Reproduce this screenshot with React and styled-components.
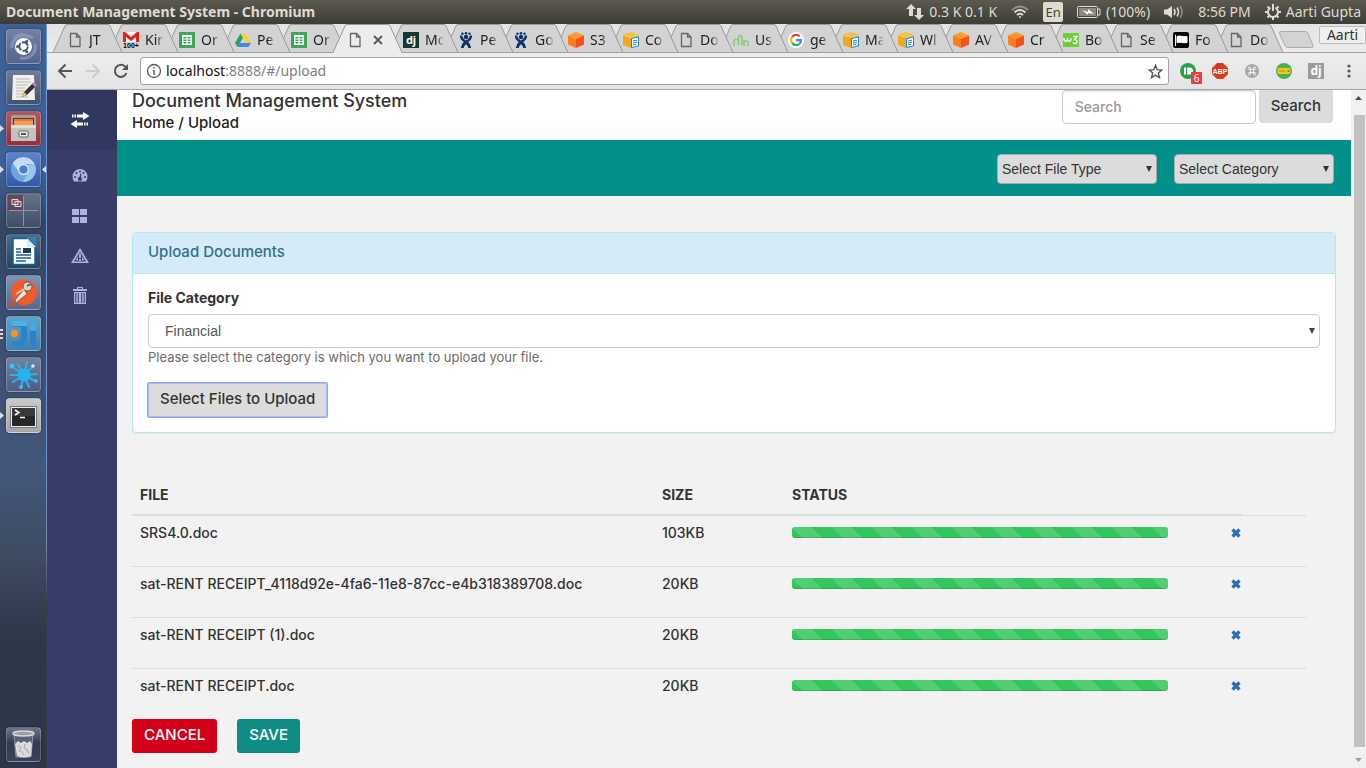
import React from 'react';
import styled, { createGlobalStyle, css } from 'styled-components';

const SYSTEM = '"Noto Sans", "Open Sans", sans-serif';
const SITE = 'Inter, "Open Sans", sans-serif';
const CONTROL = '"Liberation Sans", Arial, sans-serif';

const GlobalStyle = createGlobalStyle`
  *, *::before, *::after { box-sizing: border-box; }
  body { margin: 0; background: #f2f2f2; color: #333; }
  button, input, select { margin: 0; font: inherit; color: inherit; }
  button { cursor: pointer; }
  svg { display: block; flex: none; }
`;

/* ---------- desktop shell ---------- */

const Desktop = styled.div`
  display: grid;
  grid-template-columns: 47px minmax(0, 1fr);
  grid-template-rows: 24px minmax(0, 1fr);
  height: 100vh;
  overflow: hidden;
`;

const MenuBar = styled.header`
  grid-column: 1 / -1;
  display: flex;
  align-items: center;
  justify-content: space-between;
  padding: 0 5px 0 6px;
  background: linear-gradient(#5c594f, #3d3c37);
  color: #dfdbd2;
  font: 14px/24px ${SYSTEM};
  white-space: nowrap;
`;

const WindowTitle = styled.h1`
  margin: 0;
  font: 700 14px/24px ${SYSTEM};
`;

const Indicators = styled.div`
  display: flex;
  align-items: center;
  gap: 14px;
`;

const Indicator = styled.span`
  display: flex;
  align-items: center;
  gap: 5px;
`;

const Keyboard = styled.span`
  width: 20px;
  height: 20px;
  border-radius: 2px;
  background: #dfdbd2;
  color: #45433d;
  font-size: 13px;
  line-height: 20px;
  text-align: center;
`;

const Launcher = styled.nav`
  display: flex;
  flex-direction: column;
  gap: 6px;
  padding: 5px 5px 6px 6px;
  border-right: 1px solid #5c80b2;
  border-image: linear-gradient(#6d97d2 0 55%, #6f89a8 70%, #3a3b3b 78%) 1;
  background: linear-gradient(#3d6198 0, #3e6096 20%, #344563 27%, #3c4f72 40%, #43577b 60%, #3d4a60 72%, #2f374b 82%, #2e364a 100%);
`;

const LaunchButton = styled.button`
  position: relative;
  flex: none;
  width: 35px;
  height: 35px;
  padding: 0;
  border: 1px solid rgba(255, 255, 255, 0.22);
  border-radius: 4px;
  background: ${(p) => p.$tint};
  box-shadow: 0 0 3px rgba(0, 0, 0, 0.4);
  &:last-child { margin-top: auto; }
`;

const Running = styled.svg`
  position: absolute;
  top: 12px;
  ${(p) => (p.$right ? 'right: -6px;' : 'left: -7px;')}
`;

const BrowserWindow = styled.div`
  display: flex;
  flex-direction: column;
  min-width: 0;
`;

/* ---------- browser chrome ---------- */

const TabStrip = styled.div`
  position: relative;
  display: flex;
  flex: none;
  height: 29px;
  padding-left: 6px;
  background: linear-gradient(#e3e3e3, #ececec);
  border-bottom: 1px solid #a0a0a0;
`;

const Tab = styled.button`
  position: relative;
  z-index: ${(p) => p.$level};
  display: flex;
  align-items: center;
  gap: 6px;
  flex: none;
  width: ${(p) => (p.$wide ? 56 : 55)}px;
  height: 29px;
  padding: 2px 0 0 14px;
  border: 0;
  background: none;
  color: #222;
  font: 14px/24px ${SYSTEM};
  text-align: left;
`;

const TabShape = styled.svg`
  position: absolute;
  z-index: -1;
  top: 0;
  left: 0;
`;

const TabLabel = styled.span`
  width: 19px;
  white-space: nowrap;
  mask-image: linear-gradient(90deg, #000 60%, transparent);
`;

const NewTab = styled.button`
  height: 16px;
  margin: 7px auto 0 9px;
  padding: 0;
  border: 0;
  background: none;
`;

const Profile = styled.button`
  width: 47px;
  height: 18px;
  margin-top: 2px;
  padding: 0;
  border: 1px solid #bdbdbd;
  border-radius: 2px;
  background: #efefef;
  color: #333;
  font: 14px/16px ${SYSTEM};
`;

const Toolbar = styled.div`
  display: flex;
  align-items: center;
  flex: none;
  gap: 10px;
  height: 37px;
  padding: 0 9px 0 9px;
  border-bottom: 1px solid #a6a6a6;
  background: linear-gradient(#ededed, #e4e4e4);
`;

const IconButton = styled.button`
  display: grid;
  place-items: center;
  flex: none;
  width: 18px;
  height: 18px;
  padding: 0;
  border: 0;
  background: none;
  position: relative;
`;

const Address = styled.div`
  display: flex;
  align-items: center;
  flex: 1;
  gap: 4px;
  min-width: 0;
  height: 28px;
  padding: 0 4px 0 5px;
  border: 1px solid #a3a3a3;
  border-radius: 3px;
  background: #fff;
  font: 14px/24px ${SYSTEM};
  color: #808080;
`;

const Url = styled.div`
  flex: 1;
  b { color: #111; font-weight: 400; }
`;

const Extensions = styled.div`
  display: flex;
  gap: 14px;
`;

const Count = styled.span`
  position: absolute;
  top: 10px;
  left: 12px;
  width: 11px;
  height: 12px;
  border-radius: 1px;
  background: #f03a3e;
  color: #fff;
  font: 10px/12px ${SYSTEM};
  text-align: center;
`;

/* ---------- web page ---------- */

const Page = styled.div`
  display: grid;
  grid-template-columns: 70px minmax(0, 1fr) 15px;
  flex: 1;
  min-height: 0;
  overflow: hidden;
  background: #f2f2f2;
  color: #333;
  font: 500 14px/20px ${SITE};
`;

const SideNav = styled.nav`
  display: flex;
  flex-direction: column;
  align-items: center;
  gap: 20px;
  padding-right: 4px;
  background: linear-gradient(#303862 0 60px, #353d68 60px);
`;

const SideLink = styled.a`
  display: grid;
  place-items: center;
  width: 20px;
  height: 20px;
  color: #a9b4e4;
  ${(p) => p.$lead && css`
    height: 60px;
    margin-bottom: -4px;
    color: #fff;
  `}
`;

const Content = styled.div`
  min-width: 0;
`;

const TopBar = styled.div`
  display: flex;
  justify-content: space-between;
  height: 50px;
  padding: 0 18px 0 15px;
  background: #fff;
`;

const AppTitle = styled.h2`
  margin: 0;
  font: 500 18px/22px ${SITE};
`;

const Crumbs = styled.nav`
  font-size: 15px;
  line-height: 22px;
  color: #222;
  a { color: inherit; text-decoration: none; }
`;

const SearchForm = styled.form`
  display: flex;
  align-items: flex-start;
  gap: 3px;
`;

const SearchInput = styled.input`
  width: 194px;
  height: 34px;
  padding: 0 12px 2px;
  border: 1px solid #ccc;
  border-radius: 4px;
  background: #fff;
  box-shadow: inset 0 1px 1px rgba(0, 0, 0, 0.075);
  &::placeholder { color: #999; opacity: 1; }
`;

const buttonTones = {
  plain: css`background: #dcdcdc; color: #333;`,
  danger: css`background: #d3001a; color: #fff;`,
  save: css`background: #0f8d85; color: #fff;`,
};

const Button = styled.button`
  height: 34px;
  padding: 0 12px 2px;
  border: 0;
  border-radius: 3px;
  font-size: 15px;
  white-space: nowrap;
  ${(p) => buttonTones[p.$tone || 'plain']}
  ${(p) => p.$focused && css`
    border-radius: 1px;
    box-shadow: 0 0 0 1px #8fa6f2, inset 0 0 0 1px #a9baf5;
  `}
`;

const SearchButton = styled(Button)`
  height: 33px;
  border-radius: 0 0 4px 4px;
`;

const FilterBar = styled.div`
  display: flex;
  justify-content: flex-end;
  gap: 17px;
  height: 56px;
  padding: 14px 17px 12px;
  background: #00908a;
`;

const SelectBox = styled.div`
  position: relative;
  width: ${(p) => (p.$fill ? '100%' : '160px')};
`;

const Select = styled.select`
  appearance: none;
  display: block;
  width: 100%;
  height: ${(p) => (p.$fill ? 34 : 30)}px;
  padding: 0 ${(p) => (p.$fill ? 16 : 4)}px;
  border: 1px solid ${(p) => (p.$fill ? '#ccc' : '#aaa')};
  border-radius: 4px;
  background: ${(p) => (p.$fill ? '#fff' : '#dcdcdc')};
  color: ${(p) => (p.$fill ? '#555' : '#333')};
  font: 14px/20px ${CONTROL};
`;

const SelectArrow = styled.svg`
  position: absolute;
  top: 50%;
  right: 5px;
  margin-top: -3px;
  pointer-events: none;
`;

const Main = styled.main`
  padding: 36px 15px 0;
`;

const Panel = styled.section`
  margin-bottom: 44px;
  border: 1px solid #b5e8f1;
  border-radius: 4px;
  background: #fff;
  box-shadow: 0 1px 1px rgba(0, 0, 0, 0.05);
`;

const PanelTitle = styled.h3`
  margin: 0;
  padding: 9px 15px 11px;
  border-bottom: 1px solid #b5e8f1;
  border-radius: 3px 3px 0 0;
  background: #d5ecf8;
  color: #31708f;
  font: 500 15px/20px ${SITE};
`;

const PanelBody = styled.div`
  display: flex;
  flex-direction: column;
  align-items: flex-start;
  padding: 14px 15px 15px;
`;

const FieldLabel = styled.label`
  margin-bottom: 6px;
  font-weight: 700;
`;

const Help = styled.p`
  margin: 0 0 16px;
  color: #6b6b6b;
  font-size: 13px;
  font-weight: 400;
  line-height: 19px;
`;

const TableArea = styled.div`
  padding-right: 30px;
`;

const FileTable = styled.table`
  width: 100%;
  table-layout: fixed;
  border-collapse: collapse;
  th, td { padding: 8px; text-align: left; vertical-align: top; }
  th { padding-bottom: 9px; font-weight: 700; border-bottom: 2px solid #ddd; }
  td { height: 51px; padding-top: 7px; border-top: 1px solid #ddd; }
`;

const Col = styled.col`
  width: ${(p) => p.$width};
`;

const Progress = styled.div`
  width: 376px;
  max-width: 100%;
  height: 11px;
  margin-top: 4px;
  border-radius: 3px;
  background: #32c65c linear-gradient(45deg, rgba(255, 255, 255, 0.15) 25%, transparent 25%, transparent 50%, rgba(255, 255, 255, 0.15) 50%, rgba(255, 255, 255, 0.15) 75%, transparent 75%) 0 0 / 40px 40px;
  box-shadow: inset 0 -1px 0 rgba(0, 0, 0, 0.15);
`;

const Remove = styled.button`
  display: block;
  margin-top: 5px;
  padding: 0;
  border: 0;
  background: none;
  color: #2a6db5;
`;

const Actions = styled.div`
  display: flex;
  gap: 20px;
`;

const Scrollbar = styled.div`
  display: flex;
  flex-direction: column;
  align-items: center;
  gap: 11px;
  padding: 6px 0 6px;
  background: #f1f1f1;
`;

const Thumb = styled.div`
  flex: 1;
  width: 11px;
  margin: 4px 0 0 1px;
  background: #c1c1c1;
`;

/* ---------- drawings ---------- */

const Small = ({ children }) => (
  <svg width="16" height="16" viewBox="0 0 16 16" aria-hidden="true">{children}</svg>
);

const favicons = {
  doc: <Small><path d="M3.500 1.500h6l3.500 3.500v9.500h-9.500zM9.500 1.500v3.500h3.500" fill="none" stroke="#666" strokeWidth="1.300" /></Small>,
  gmail: (
    <Small>
      <path d="M0 0h16v10H0z" fill="#fff" />
      <path d="M0 10V0h2l6 5 6-5h2v10h-3V5L8 9 3 5v5z" fill="#e2231a" />
      <text x="8" y="16" textAnchor="middle" fontFamily="Liberation Sans" fontWeight="700" fontSize="7">100+</text>
    </Small>
  ),
  sheet: (
    <Small>
      <path d="M0 0h16v16H0z" fill="#3fa55a" />
      <path d="M3 3h10v10H3z" fill="#fff" />
      <path d="M4.500 5h3v1.500h-3zM8.500 5h3v1.500h-3zM4.500 7.500h3V9h-3zM8.500 7.500h3V9h-3zM4.500 10h3v1.500h-3zM8.500 10h3v1.500h-3z" fill="#3fa55a" />
    </Small>
  ),
  drive: (
    <Small>
      <path d="M5.500 1.500 0 11l2.600 4L8 5.700z" fill="#1fa463" />
      <path d="M5.500 1.500h5L16 11h-5z" fill="#fc3" />
      <path d="M5 11h11l-2.600 4H2.600z" fill="#4285f4" />
    </Small>
  ),
  dj: (
    <Small>
      <path d="M0 0h16v16H0z" fill="#103a2c" />
      <text x="8" y="12" textAnchor="middle" fontFamily="Noto Sans" fontWeight="700" fontSize="11" fill="#fff">dj</text>
    </Small>
  ),
  jira: (
    <Small>
      <g fill="#0c336b">
        <circle cx="4.500" cy="1.800" r="1.200" /><circle cx="8" cy="1.300" r="1.300" /><circle cx="11.500" cy="1.800" r="1.200" />
        <circle cx="8" cy="5" r="2.200" />
        <path d="M1.800 3.500h2.400q.3 3.200 3.800 5 3.500-1.800 3.800-5h2.400q-.4 4.500-4 6.500 2.400 1.800 3 6h-2.900Q9.800 13.500 8 12.200 6.200 13.500 5.700 16H2.800q.6-4.200 3-6-3.600-2-4-6.500z" />
      </g>
    </Small>
  ),
  cube: (
    <Small>
      <path d="m8 0 8 3.500L8 7 0 3.500z" fill="#ff9a2a" />
      <path d="M0 3.500 8 7v9l-8-3.500z" fill="#fd7b1c" />
      <path d="M16 3.500 8 7v9l8-3.500z" fill="#f4511e" />
    </Small>
  ),
  note: (
    <Small>
      <path d="m8 0 8 2.500L8 5 0 2.500z" fill="#f8c13a" />
      <path d="M0 3.200 8 6v10l-8-3z" fill="#f5a81c" />
      <path d="m8 6 8-3v9l-8 4z" fill="#f3b13a" />
      <path d="m8.500 6.500 7-1.500v9l-7 1.500z" fill="#fff" stroke="#1b87c9" />
      <path d="m10 9 4-.8M10 11l4-.8M10 13l3-.6" stroke="#1b87c9" />
    </Small>
  ),
  rabbit: (
    <Small>
      <path d="M1 14V9a2.300 2.300 0 0 1 4.500 0v4M5.500 12V5a1.800 1.800 0 0 1 3.500 0v8M11 8v6m0-3a2 2 0 0 1 4 0v3" fill="none" stroke="#8cc878" strokeWidth="1.600" />
    </Small>
  ),
  google: (
    <Small>
      <circle cx="8" cy="8" r="8" fill="#fff" />
      <g fill="none" strokeWidth="2.200">
        <path d="M4 5a5 5 0 0 1 7.600-.7" stroke="#ea4335" />
        <path d="M4.100 11A5 5 0 0 1 4 5" stroke="#fbbc05" />
        <path d="M11.500 11.700A5 5 0 0 1 4 11" stroke="#34a853" />
        <path d="M8 8.200h5a5 5 0 0 1-1.600 3.600" stroke="#4285f4" />
      </g>
    </Small>
  ),
  w3: (
    <Small>
      <path d="M0 1h16v14H0z" fill="#6ccf3a" />
      <path d="M1 6v1.500a1.500 1.500 0 0 0 3.500 0V6v1.500a1.500 1.500 0 0 0 3.500 0V6.500M10 4.500h4l-2.300 3c3 0 3 4 .3 4q-1.500 0-2-1" fill="none" stroke="#fff" strokeWidth="1.400" />
    </Small>
  ),
  flag: (
    <Small>
      <rect width="16" height="16" rx="2" fill="#000" />
      <path d="M2.500 3v11M4 4.500c3-1.500 6 1 10 0v6c-4 1-7-1-10 0z" fill="#fff" stroke="#fff" />
    </Small>
  ),
};

const TABS = [
  ['doc', 'JT'], ['gmail', 'Kir'], ['sheet', 'Or'], ['drive', 'Pe'], ['sheet', 'Or'], ['doc', ''],
  ['dj', 'Mo'], ['jira', 'Pe'], ['jira', 'Go'], ['cube', 'S3'], ['note', 'Co'], ['doc', 'Do'],
  ['rabbit', 'Us'], ['google', 'ge'], ['note', 'Ma'], ['note', 'Wl'], ['cube', 'AV'], ['cube', 'Cr'],
  ['w3', 'Bo'], ['doc', 'Se'], ['flag', 'Fo'], ['doc', 'Do'],
];
const ACTIVE_TAB = 5;

function BrowserTab({ icon, label, index }) {
  const active = index === ACTIVE_TAB;
  return (
    <Tab type="button" $wide={index <= ACTIVE_TAB} $level={active ? 40 : 30 - index} aria-label={label || 'Upload'}>
      <TabShape width="69" height="29" viewBox="0 0 69 29" aria-hidden="true">
        <path d="M0 28.500 12 2q.6-1.500 2-1.500h41q1.400 0 2 1.500l12 26.500" fill={active ? '#ececec' : '#d3d3d3'} stroke="#999" />
        <path d={active ? 'M1 28.500h67' : 'M0 28.500h69'} stroke={active ? '#ececec' : '#a0a0a0'} />
      </TabShape>
      {favicons[icon]}
      {active ? (
        <svg width="16" height="10" viewBox="0 0 16 10" aria-hidden="true"><path d="m5 1 8 8m0-8-8 8" stroke="#555" strokeWidth="1.800" /></svg>
      ) : <TabLabel>{label}</TabLabel>}
    </Tab>
  );
}

const Tile = ({ children }) => (
  <svg width="33" height="33" viewBox="0 0 33 33" aria-hidden="true">{children}</svg>
);

const LAUNCHERS = [
  {
    name: 'Search your computer', tint: 'linear-gradient(#7281a4, #53658f)',
    art: (
      <Tile>
        <path d="M5 18C4 8 16 2 26 8M28 14c2 8-5 16-15 14M7 8c5-4 12-4 16 0" fill="none" stroke="#9aa6c2" strokeWidth="3" opacity=".6" />
        <circle cx="16.500" cy="16.500" r="8.500" fill="#fff" />
        <circle cx="16.500" cy="16.500" r="4.200" fill="none" stroke="#45557b" strokeWidth="2" strokeDasharray="7.500 1.300" />
        <circle cx="10.500" cy="16.500" r="1.500" fill="#45557b" /><circle cx="19.800" cy="11.300" r="1.500" fill="#45557b" /><circle cx="19.800" cy="21.700" r="1.500" fill="#45557b" />
      </Tile>
    ),
  },
  {
    name: 'Text Editor', tint: 'linear-gradient(#6d7c9a, #42536f)',
    art: (
      <Tile>
        <path d="M6 4h21l1 25H5z" fill="#efefec" />
        <path d="M9 8h14M9 11h15M9 14h12M9 17h9M9 20h8M9 23h7M9 26h12" stroke="#b9b9b5" />
        <path d="m15 26 2-5 9-9 3 3-9 9z" fill="#333" />
        <path d="m15 26 2-5 3 3z" fill="#e8c93c" /><path d="m25 13 2-2 3 3-2 2z" fill="#c77fc4" />
      </Tile>
    ),
  },
  {
    name: 'Files', tint: 'linear-gradient(#b5555c, #8c3340)', running: 1,
    art: (
      <Tile>
        <path d="M4 5q0-2 2-2h21q2 0 2 2v9H4z" fill="#a3a09a" />
        <path d="M6 6h21v8H6z" fill="#5b3722" /><path d="M7 7h19v4H7z" fill="#e2793a" /><path d="M7 9h19v4H7z" fill="#f39b58" />
        <path d="M4 13h25v16H4z" fill="#c4c2bc" /><path d="M4 13h25v3H4z" fill="#dedcd7" />
        <rect x="12" y="19" width="9" height="6" rx="1" fill="#eee" stroke="#666" /><path d="M14 22h5" stroke="#555" strokeWidth="2" />
      </Tile>
    ),
  },
  {
    name: 'Chromium', tint: 'linear-gradient(#5e84c9, #3459a5)', running: 1, focused: true,
    art: (
      <Tile>
        <circle cx="16.500" cy="16.500" r="12.500" fill="#6fa5dc" />
        <path d="M5.700 10.300A12.500 12.500 0 0 1 27.500 11H16.500A5.500 5.500 0 0 0 11.300 18z" fill="#c3dbf3" />
        <path d="M27.500 11a12.500 12.500 0 0 1-11.500 18l5.300-9.700a5.500 5.500 0 0 0-1-7.300z" fill="#9cc5ed" />
        <circle cx="16.500" cy="16.500" r="5.500" fill="#e9f2fb" /><circle cx="16.500" cy="16.500" r="4.300" fill="#4681c9" />
      </Tile>
    ),
  },
  {
    name: 'Workspace Switcher', tint: 'linear-gradient(#66718a, #404d66)',
    art: (
      <Tile>
        <path d="M1 1h15v15H1z" fill="#653947" opacity=".7" />
        <path d="M16.500 2v30M2 16.500h29" stroke="#8c93a3" />
        <path d="M5 5.500h6v5H5zM8 7.500h6v5H8z" fill="#7b5360" stroke="#ddd" />
      </Tile>
    ),
  },
  {
    name: 'LibreOffice Writer', tint: 'linear-gradient(#4d6b8a, #2a4260)',
    art: (
      <Tile>
        <path d="M21 2h8v9z" fill="#2d84b5" />
        <path d="M6 3.500h14l8 8v18H6z" fill="#fff" stroke="#0c6492" strokeWidth="1.500" />
        <path d="M20 3v9h9z" fill="#dbe9f3" />
        <path d="M9 14h5M9 17h5M9 20h15M9 23h15M9 26h10" stroke="#17618f" strokeWidth="1.600" /><path d="M16 13h8v5h-8z" fill="#173f63" />
      </Tile>
    ),
  },
  {
    name: 'Postman', tint: 'linear-gradient(#8092b4, #566a8f)',
    art: (
      <Tile>
        <circle cx="17" cy="16.500" r="13" fill="#f15a29" /><path d="M3 24v6h6z" fill="#e04a1b" />
        <circle cx="20.500" cy="10.500" r="4.500" fill="#d9d6d0" stroke="#6f5a50" /><path d="m20 10 4-2" stroke="#555" strokeWidth="1.500" />
        <path d="M17 13 8 24l1 3 11-9z" fill="#e7e1d8" stroke="#7a4630" strokeWidth=".8" /><path d="m9 18 8-5" stroke="#f8c39b" strokeWidth="2" />
      </Tile>
    ),
  },
  {
    name: 'IntelliJ IDEA', tint: 'linear-gradient(#5fa3c8, #3e83b1)', running: 3,
    art: (
      <Tile>
        <path d="M5 4h15v14q0 11-10 11H7q-2 0-2-2.500T7 24h2q5 0 5-6V10H5z" fill="#2b84cb" /><path d="M5 4h15v5H5z" fill="#4db1e6" />
        <rect x="23" y="4" width="6" height="25" rx="2.500" fill="#2f80c8" /><rect x="23" y="4" width="6" height="10" rx="2.500" fill="#49a8e0" />
        <circle cx="7.500" cy="16.500" r="3.800" fill="#f7941d" />
      </Tile>
    ),
  },
  {
    name: 'Paint', tint: 'linear-gradient(#73829f, #4b5d83)',
    art: (
      <Tile>
        <circle cx="17" cy="17" r="6.500" fill="#28b4ea" />
        <path d="M17 17 4 8M17 17 20 4M17 17l9-9M17 17l13-1M17 17l11 6M17 17l5 12M17 17l-3 13M17 17 6 24M17 17 3 17M17 17l-6-11" stroke="#28b4ea" strokeWidth="2" strokeLinecap="round" />
        <circle cx="5" cy="8" r="2.500" fill="#37c0f0" /><circle cx="26" cy="8" r="1.800" fill="#bfefff" /><circle cx="29" cy="23" r="1.800" fill="#37c0f0" /><circle cx="14" cy="29" r="2" fill="#37c0f0" />
      </Tile>
    ),
  },
  {
    name: 'Terminal', tint: 'linear-gradient(#c9c9cb, #a5a4a8)', running: 1,
    art: (
      <Tile>
        <rect x="3.500" y="7.500" width="26" height="21" fill="#eee" stroke="#777" /><path d="M5 9h23v18H5z" fill="#262626" />
        <path d="M5 9h23v8H5z" fill="#3a3a3a" /><path d="m8 11 4 2.500L8 16M13 18.500h5" fill="none" stroke="#fff" strokeWidth="1.500" />
      </Tile>
    ),
  },
  {
    name: 'Trash', tint: 'linear-gradient(#6e7588, #333b53 45%, #3a425a)',
    art: (
      <Tile>
        <path d="M7 6h19l-2 23H9z" fill="#59627a" stroke="#8d94a5" />
        <path d="m8 16 3-3 3 2 3-2 3 2 3-2 2 3-1 12q-7 3-14 0z" fill="#dcdcd8" />
        <path d="m11 17 3 3-2 4m6-8-1 4 4 3m-7 0 3 4m3-6 2 5" stroke="#aaa9a5" fill="none" />
        <ellipse cx="16.500" cy="5.500" rx="10.500" ry="2.500" fill="#9a9ea6" stroke="#d8d8d5" strokeWidth="1.500" />
      </Tile>
    ),
  },
];

const SideIcon = ({ children }) => (
  <svg width="20" height="20" viewBox="0 0 20 20" fill="currentColor" aria-hidden="true">{children}</svg>
);

const SIDE_LINKS = [
  { name: 'Toggle menu', lead: true, art: <path d="M2 4.500h1.500v3H2zM4.500 4.500H6v3H4.500zM7 4.500h6V2l6.500 4L13 10V7.500H7zM18 12.500h-1.500v3H18zM15.500 12.500H14v3h1.500zM13 12.500H7V10L.5 14 7 18v-2.500h6z" /> },
  { name: 'Dashboard', art: <><path d="M10 3a7.500 7.500 0 0 0-7.500 7.500q0 3 1.500 5h12q1.500-2 1.500-5A7.500 7.500 0 0 0 10 3z" /><g fill="#353d68"><circle cx="5" cy="11" r="1" /><circle cx="6.500" cy="7" r="1" /><circle cx="10" cy="5.500" r="1" /><circle cx="13.500" cy="7" r="1" /><circle cx="15" cy="11" r="1" /><path d="m10.500 7.500 1 .3-.5 3.500a2 2 0 1 1-1.500-.3z" /></g></> },
  { name: 'Categories', art: <path d="M2 3h7v6H2zM10 3h7v6h-7zM2 11h7v6H2zM10 11h7v6h-7z" /> },
  { name: 'Alerts', art: <path fillRule="evenodd" d="M10 2 1 17h18zM10 5.500 4 15.500h12zM9 7.500h2V12H9zM9 13h2v2H9zM6 13.500l2-3v4H6zM14 13.500l-2-3v4h2z" /> },
  { name: 'Trash', art: <path fillRule="evenodd" d="M7 3V1h6v2h4v2H3V3zM8.200 2v1h3.600V2zM4 6h12v12H4zM5.300 7v10h1V7zM7.800 7v10h1V7zM11.200 7v10h1V7zM13.700 7v10h1V7z" /> },
];

const FILES = [
  ['SRS4.0.doc', '103KB'],
  ['sat-RENT RECEIPT_4118d92e-4fa6-11e8-87cc-e4b318389708.doc', '20KB'],
  ['sat-RENT RECEIPT (1).doc', '20KB'],
  ['sat-RENT RECEIPT.doc', '20KB'],
];

function Dropdown({ label, id, fill, value }) {
  return (
    <SelectBox $fill={fill}>
      <Select id={id} $fill={fill} aria-label={id ? undefined : label}>
        <option>{value}</option>
      </Select>
      <SelectArrow width="6" height="6" viewBox="0 0 6 6" aria-hidden="true">
        <path d="M0 0h6L3 6z" fill={fill ? '#444' : '#333'} />
      </SelectArrow>
    </SelectBox>
  );
}

function SystemBar() {
  return (
    <MenuBar>
      <WindowTitle>Document Management System - Chromium</WindowTitle>
      <Indicators>
        <Indicator>
          <svg width="18" height="18" viewBox="0 0 18 18" fill="#dfdbd2" aria-hidden="true"><path d="M5 1 0 6h3v7h4V6h3zM13 17l5-5h-3V5h-4v7H8z" /></svg>
          0.3 K 0.1 K
        </Indicator>
        <svg width="18" height="14" viewBox="0 0 18 14" fill="none" stroke="#dfdbd2" strokeWidth="1.800" aria-hidden="true">
          <path d="M1 5q8-7 16 0" opacity=".45" /><path d="M3.500 7.500q5.500-5 11 0M6 10q3-2.500 6 0" /><circle cx="9" cy="12" r="1" fill="#dfdbd2" stroke="none" />
        </svg>
        <Keyboard>En</Keyboard>
        <Indicator>
          <svg width="24" height="12" viewBox="0 0 24 12" aria-hidden="true">
            <rect x=".5" y=".5" width="20" height="11" rx="1" fill="none" stroke="#dfdbd2" /><path d="M21 3h2v6h-2" fill="none" stroke="#dfdbd2" />
            <path d="M2 2h17v8H2z" fill="#8b8880" /><path d="m5 4 6 2V3l6 5-6-1v2z" fill="#fff" />
          </svg>
          (100%)
        </Indicator>
        <svg width="20" height="14" viewBox="0 0 20 14" fill="none" stroke="#dfdbd2" strokeWidth="1.600" aria-hidden="true">
          <path d="M0 4.500h3L8 1v12L3 9.500H0z" fill="#dfdbd2" stroke="none" /><path d="M10 4q2 3 0 6M13 2.500q3 4.500 0 9" /><path d="M16 1q4 6 0 12" opacity=".45" />
        </svg>
        <Indicator>8:56 PM</Indicator>
        <Indicator>
          <svg width="16" height="16" viewBox="0 0 16 16" fill="none" stroke="#dfdbd2" aria-hidden="true">
            <path d="M5.500 3.700a5 5 0 1 0 5 0" strokeWidth="2" /><path d="M8 0v7" strokeWidth="2" />
            <path d="M2.500 2.500 4 4m9.500-1.500L12 4M0 8h3m10 0h3M2.500 13.500 4 12m9.500 1.500L12 12M8 13v3" strokeWidth="2" />
          </svg>
          Aarti Gupta
        </Indicator>
      </Indicators>
    </MenuBar>
  );
}

function Chrome() {
  return (
    <>
      <TabStrip>
        {TABS.map(([icon, label], i) => <BrowserTab key={i} icon={icon} label={label} index={i} />)}
        <NewTab type="button" aria-label="New tab">
          <svg width="36" height="17" viewBox="0 0 36 17" aria-hidden="true"><path d="M3 .5h24q2 0 3 2l5 12q.5 2-1.500 2H10q-2 0-3-2L1.500 2.500Q1 .5 3 .5z" fill="#d3d3d3" stroke="#aaa" /></svg>
        </NewTab>
        <Profile type="button">Aarti</Profile>
      </TabStrip>
      <Toolbar>
        <IconButton type="button" aria-label="Back"><svg width="16" height="16" viewBox="0 0 16 16" fill="none" stroke="#555" strokeWidth="2"><path d="M15 8H2m6.500-6.500L2 8l6.500 6.500" /></svg></IconButton>
        <IconButton type="button" aria-label="Forward"><svg width="16" height="16" viewBox="0 0 16 16" fill="none" stroke="#ccc" strokeWidth="2"><path d="M1 8h13M7.500 1.500 14 8l-6.500 6.500" /></svg></IconButton>
        <IconButton type="button" aria-label="Reload"><svg width="16" height="16" viewBox="0 0 16 16" fill="none" stroke="#555" strokeWidth="2"><path d="M13.500 10a6 6 0 1 1-1.500-6.500L14 5.500" /><path d="M15 1v6H9z" fill="#555" stroke="none" /></svg></IconButton>
        <Address>
          <svg width="16" height="16" viewBox="0 0 16 16" aria-hidden="true"><circle cx="8" cy="8" r="6.500" fill="none" stroke="#555" strokeWidth="1.300" /><path d="M7.300 4h1.500v1.500H7.300zM7.300 7h1.500v5H7.300z" fill="#555" /></svg>
          <Url><b>localhost</b>:8888/#/upload</Url>
          <IconButton type="button" aria-label="Bookmark"><svg width="15" height="15" viewBox="0 0 16 16"><path d="m8 1.500 1.900 4.500 4.800.4L11 9.600l1.200 4.800L8 11.800l-4.200 2.600L5 9.600 1.300 6.400 6.100 6z" fill="none" stroke="#555" strokeWidth="1.500" /></svg></IconButton>
        </Address>
        <Extensions>
          <IconButton type="button" aria-label="Pushbullet">
            <Small><circle cx="8" cy="8" r="8" fill="#26a248" /><path d="M4 4.500h2v7H4zM7 4.500h2.500a3.500 3.500 0 0 1 0 7H7z" fill="#fff" /></Small>
            <Count>6</Count>
          </IconButton>
          <IconButton type="button" aria-label="Adblock Plus"><Small><path d="M5 0h6l5 5v6l-5 5H5l-5-5V5z" fill="#d8391f" /><text x="8" y="11" textAnchor="middle" fontFamily="Liberation Sans" fontWeight="700" fontSize="7" fill="#fff">ABP</text></Small></IconButton>
          <IconButton type="button" aria-label="Shortcuts"><Small><circle cx="8" cy="8" r="7" fill="#a6a6a6" /><path d="M6.500 5v6M9.500 5v6M5 6.500h6M5 9.500h6" stroke="#fff" strokeWidth=".8" /><g fill="none" stroke="#fff" strokeWidth=".8"><circle cx="5.300" cy="5.300" r="1.200" /><circle cx="10.700" cy="5.300" r="1.200" /><circle cx="5.300" cy="10.700" r="1.200" /><circle cx="10.700" cy="10.700" r="1.200" /></g></Small></IconButton>
          <IconButton type="button" aria-label="Coupons"><Small><circle cx="8" cy="8" r="8" fill="#48b34a" /><rect x="1.500" y="5" width="13" height="6" rx="1" fill="#f1c51b" /><path d="M3 8h6" stroke="#b98c10" /><circle cx="12.500" cy="8" r="1" fill="#6b8d1c" /></Small></IconButton>
          <IconButton type="button" aria-label="Django"><Small><path d="M0 0h16v16H0z" fill="#9b9b9b" /><text x="8" y="12" textAnchor="middle" fontFamily="Noto Sans" fontWeight="700" fontSize="12" fill="#fff">dj</text></Small></IconButton>
          <IconButton type="button" aria-label="Menu"><Small><g fill="#555"><circle cx="9" cy="3" r="1.600" /><circle cx="9" cy="8" r="1.600" /><circle cx="9" cy="13" r="1.600" /></g></Small></IconButton>
        </Extensions>
      </Toolbar>
    </>
  );
}

export default function App() {
  return (
    <>
      <GlobalStyle />
      <Desktop>
        <SystemBar />
        <Launcher aria-label="Launcher">
          {LAUNCHERS.map((item) => (
            <LaunchButton key={item.name} type="button" aria-label={item.name} $tint={item.tint}>
              {item.art}
              {item.running && (
                <Running width="4" height="10" viewBox="0 0 4 10" aria-hidden="true">
                  <path d={item.running === 3 ? 'M0 0h3v2H0zM0 4h3v2H0zM0 8h3v2H0z' : 'M0 1v7l4-3.500z'} fill="#ddd" />
                </Running>
              )}
              {item.focused && (
                <Running $right width="4" height="10" viewBox="0 0 4 10" aria-hidden="true"><path d="M4 1v7L0 4.500z" fill="#ddd" /></Running>
              )}
            </LaunchButton>
          ))}
        </Launcher>
        <BrowserWindow>
          <Chrome />
          <Page>
            <SideNav aria-label="Sections">
              {SIDE_LINKS.map((link) => (
                <SideLink key={link.name} href="#" aria-label={link.name} $lead={link.lead}><SideIcon>{link.art}</SideIcon></SideLink>
              ))}
            </SideNav>
            <Content>
              <TopBar>
                <div>
                  <AppTitle>Document Management System</AppTitle>
                  <Crumbs><a href="#home">Home</a> / <a href="#upload">Upload</a></Crumbs>
                </div>
                <SearchForm onSubmit={(e) => e.preventDefault()}>
                  <SearchInput type="text" placeholder="Search" aria-label="Search" />
                  <SearchButton type="submit">Search</SearchButton>
                </SearchForm>
              </TopBar>
              <FilterBar>
                <Dropdown label="File type" value="Select File Type" />
                <Dropdown label="Category" value="Select Category" />
              </FilterBar>
              <Main>
                <Panel>
                  <PanelTitle>Upload Documents</PanelTitle>
                  <PanelBody>
                    <FieldLabel htmlFor="file-category">File Category</FieldLabel>
                    <Dropdown id="file-category" fill value="Financial" />
                    <Help>Please select the category is which you want to upload your file.</Help>
                    <Button type="button" $focused>Select Files to Upload</Button>
                  </PanelBody>
                </Panel>
                <TableArea>
                  <FileTable>
                    <colgroup>
                      <Col $width="auto" /><Col $width="130px" /><Col $width="439px" /><Col $width="19px" /><Col $width="64px" />
                    </colgroup>
                    <thead>
                      <tr><th>FILE</th><th>SIZE</th><th colSpan={2}>STATUS</th></tr>
                    </thead>
                    <tbody>
                      {FILES.map(([name, size]) => (
                        <tr key={name}>
                          <td>{name}</td>
                          <td>{size}</td>
                          <td><Progress role="progressbar" aria-valuenow={100} aria-label={`Upload of ${name}`} /></td>
                          <td colSpan={2}>
                            <Remove type="button" aria-label={`Remove ${name}`}>
                              <svg width="10" height="10" viewBox="0 0 10 10" aria-hidden="true"><path d="m1.500 1.500 7 7m0-7-7 7" stroke="currentColor" strokeWidth="3.200" /></svg>
                            </Remove>
                          </td>
                        </tr>
                      ))}
                    </tbody>
                  </FileTable>
                </TableArea>
                <Actions>
                  <Button type="button" $tone="danger">CANCEL</Button>
                  <Button type="button" $tone="save">SAVE</Button>
                </Actions>
              </Main>
            </Content>
            <Scrollbar aria-hidden="true">
              <svg width="7" height="4" viewBox="0 0 7 4"><path d="M0 4h7L3.500 0z" fill="#505050" /></svg>
              <Thumb />
              <svg width="7" height="4" viewBox="0 0 7 4"><path d="M0 0h7L3.500 4z" fill="#a0a0a0" /></svg>
            </Scrollbar>
          </Page>
        </BrowserWindow>
      </Desktop>
    </>
  );
}
